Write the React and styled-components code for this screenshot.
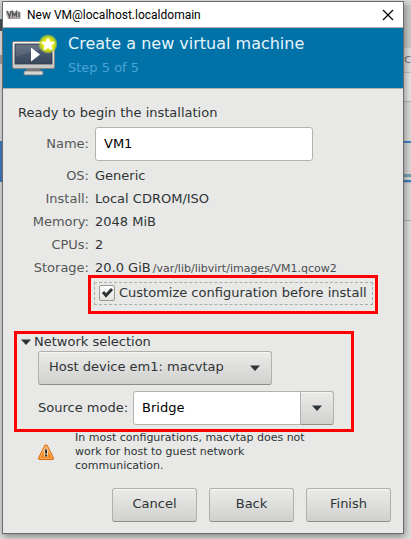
import React, { useState } from "react";
import styled, { createGlobalStyle } from "styled-components";

const GlobalStyle = createGlobalStyle`
  *, *::before, *::after { box-sizing: border-box; }
  html { background: #e2e2e2; }
  body { margin: 0; }
  body, button, input, select {
    font-family: "DejaVu Sans", sans-serif;
    font-size: 13px;
    color: #2e3436;
  }
`;

const Desktop = styled.div`
  display: grid;
  grid-template-columns: 2px 1fr 7px;
  min-height: 100vh;
  overflow: hidden;
`;

const Edge = styled.div`
  display: flex;
  flex-direction: column;
  overflow: hidden;
  background: #dedede;
`;

const EdgePart = styled.div`
  flex: none;
  height: ${(p) => p.$height}px;
  background: ${(p) => p.$fill};
  border-top: ${(p) => p.$line || 0}px solid ${(p) => p.$lineColor || "#c2c2c2"};
  font-size: 13px;
  line-height: 21px;
  color: #777;
`;

const Dialog = styled.main`
  position: relative;
  align-self: start;
  margin-top: 1px;
  border: 1px solid #6c6c6c;
  background: #e8e8e6;
  box-shadow: 1px 3px 7px rgba(0, 0, 0, 0.4);
`;

const TitleBar = styled.div`
  display: flex;
  align-items: center;
  height: 25px;
  padding: 0 6px 0 3px;
  background: #fff;
`;

const WindowTitle = styled.h1`
  flex: 1;
  margin: 0 0 0 6px;
  font: 12px/24px Roboto, "Open Sans", sans-serif;
  color: #000;
`;

const CloseButton = styled.button`
  display: flex;
  align-items: center;
  padding: 3px;
  border: 0;
  background: none;
`;

const Banner = styled.header`
  display: flex;
  gap: 11px;
  height: 62px;
  padding: 6px 8px;
  border: solid #b0b0ac;
  border-width: 1px 0;
  background: #0072a8;
`;

const BannerTitle = styled.h2`
  margin: 0;
  font-size: 16px;
  font-weight: normal;
  line-height: 20px;
  color: #e8f4fa;
`;

const Step = styled.p`
  margin: 4px 0 0;
  line-height: 20px;
  color: #4ba3d6;
`;

const Content = styled.form`
  padding: 16px 12px 11px 15px;
`;

const Intro = styled.p`
  margin: 0;
  line-height: 16px;
`;

const NameRow = styled.div`
  display: grid;
  grid-template-columns: 71px 1fr;
  gap: 6px;
  align-items: center;
  margin: 6px 0 3px;
`;

const NameLabel = styled.label`
  padding-bottom: 2px;
  text-align: right;
  color: #555856;
`;

const TextInput = styled.input`
  width: ${(p) => p.$width || "100%"};
  min-width: 0;
  height: 34px;
  padding: 0 8px 2px;
  border: 1px solid #b2b2ae;
  border-radius: ${(p) => (p.$joined ? "3px 0 0 3px" : "3px")};
  background: #fff;
  color: #000;
  outline: none;
`;

const Summary = styled.dl`
  display: grid;
  grid-template-columns: 71px 1fr;
  column-gap: 6px;
  margin: 0;
  line-height: 23px;
`;

const Term = styled.dt`
  text-align: right;
  color: #555856;
`;

const Detail = styled.dd`
  margin: 0;
  white-space: nowrap;
`;

const Path = styled.span`
  margin-left: 2px;
  font-size: 11px;
  color: #4a4e4e;
`;

const Callout = styled.div`
  position: relative;
  width: fit-content;
  margin: ${(p) => p.$margin};
  &::after {
    content: "";
    position: absolute;
    inset: ${(p) => p.$reach};
    border: 3px solid #fe0000;
    pointer-events: none;
  }
`;

const CheckLabel = styled.label`
  display: flex;
  align-items: center;
  gap: 4px;
  height: 23px;
  padding: 0 5px 2px 4px;
  border: 1px dashed #acacaa;
  white-space: nowrap;
`;

const CheckWrap = styled.span`
  display: grid;
  width: 16px;
  height: 16px;
  > * { grid-area: 1 / 1; }
`;

const Checkbox = styled.input`
  appearance: none;
  width: 16px;
  height: 16px;
  margin: 0;
  border: 1px solid #989894;
  border-radius: 2px;
  background: linear-gradient(#fff, #e2e2e0);
`;

const CheckMark = styled.svg`
  pointer-events: none;
`;

const Disclosure = styled.button`
  display: flex;
  align-items: center;
  gap: 3px;
  height: 16px;
  padding: 0 0 2px 3px;
  border: 0;
  background: none;
  line-height: 16px;
`;

const face = `
  border: 1px solid #b0b0ac;
  border-bottom-color: #8e8e8b;
  background: linear-gradient(#ebebe9, #d0d0ce);
  box-shadow: inset 0 1px #f8f8f6;
`;

const Network = styled.div`
  display: flex;
  flex-direction: column;
  gap: 6px;
  padding-left: 20px;
`;

const SelectWrap = styled.div`
  display: grid;
  grid-template-columns: 1fr 30px;
  align-items: center;
  width: 234px;
  > select { grid-area: 1 / 1 / 2 / 3; }
  > svg { grid-area: 1 / 2; pointer-events: none; z-index: 1; margin-left: 8px; }
`;

const Select = styled.select`
  ${face}
  appearance: none;
  height: 34px;
  padding: 0 30px 3px 10px;
  border-radius: 3px;
`;

const SourceRow = styled.div`
  display: flex;
  align-items: center;
  width: 296px;
`;

const SourceLabel = styled.label`
  flex: none;
  width: 95px;
  padding-bottom: 2px;
`;

const DropButton = styled.button`
  ${face}
  display: flex;
  flex: none;
  align-items: center;
  justify-content: center;
  width: 34px;
  height: 34px;
  margin-left: -1px;
  padding: 0;
  border-radius: 0 3px 3px 0;
`;

const Notice = styled.div`
  display: flex;
  align-items: center;
  gap: 21px;
  margin: 6px 0 15px;
  padding-left: 20px;
`;

const NoticeText = styled.p`
  max-width: 256px;
  margin: 0;
  font-size: 11px;
  line-height: 14px;
`;

const Actions = styled.div`
  display: flex;
  justify-content: flex-end;
  gap: 12px;
`;

const ActionButton = styled.button`
  ${face}
  width: 85px;
  height: 34px;
  padding: 0 0 3px;
  border-radius: 3px;
`;

const Arrow = ({ width = 10 }) => (
  <svg width={width} height="6" viewBox="0 0 10 6" aria-hidden="true">
    <path d="M0 .5h10L5 6z" fill="#2e3436" />
  </svg>
);

const AppMark = () => (
  <svg width="15" height="11" viewBox="0 0 15 11" aria-hidden="true">
    <path d="M0 2h13l2 2v5l-1 1H2L0 6z" fill="#c8c8c8" />
    <path d="M1 2l2.500 6 1.500-6M6.500 8V3l2 3.500 2-3.500v5M13 3v5" fill="none" stroke="#555" strokeWidth="1.400" />
    <path d="M2 9h12" stroke="#8b7376" />
  </svg>
);

const MonitorIcon = () => (
  <svg width="46" height="44" viewBox="0 0 46 44" aria-hidden="true">
    <defs>
      <radialGradient id="glow">
        <stop offset=".45" stopColor="#f2f000" />
        <stop offset=".78" stopColor="#c9d81c" stopOpacity=".85" />
        <stop offset="1" stopColor="#a8ce38" stopOpacity="0" />
      </radialGradient>
      <linearGradient id="bezel" x2="0" y2="1">
        <stop stopColor="#f8f8f8" />
        <stop offset="1" stopColor="#c4c4c2" />
      </linearGradient>
      <linearGradient id="screen" x2="0" y2="1">
        <stop stopColor="#566579" />
        <stop offset="1" stopColor="#38475c" />
      </linearGradient>
    </defs>
    <path d="M16 34h13l1 4H15z" fill="#777" />
    <rect x="13" y="37" width="19" height="4" rx="1" fill="#d5d5d3" stroke="#777" strokeWidth=".8" />
    <rect x="1.5" y="7.500" width="42" height="27" rx="1.500" fill="url(#bezel)" stroke="#858585" />
    <rect x="4" y="10" width="37" height="20" fill="url(#screen)" stroke="#303c4c" strokeWidth=".8" />
    <path d="M5 11h35v3Q24 15 5 23z" fill="#fff" opacity=".1" />
    <path d="M20 13.500l9 7-9 7z" fill="#fff" />
    <circle cx="37" cy="10" r="10" fill="url(#glow)" />
    <path d="M37 4.500l1.700 3.700 4.100.4-3.100 2.700.9 4-3.600-2.100-3.600 2.100.9-4-3.100-2.700 4.100-.4z" fill="#fff" stroke="#fff" strokeWidth="1.500" strokeLinejoin="round" />
  </svg>
);

const WarningIcon = () => (
  <svg width="16" height="16" viewBox="0 0 16 16" aria-label="Warning">
    <defs>
      <linearGradient id="amber" x2="0" y2="1">
        <stop stopColor="#fcaf5c" />
        <stop offset="1" stopColor="#f57900" />
      </linearGradient>
    </defs>
    <path d="M7 1h2l6.500 13-.5 1.500H1L.5 14z" fill="url(#amber)" stroke="#d9680a" strokeLinejoin="round" />
    <path d="M7.500 2.500h1L14 13.500v.8H2v-.8z" fill="none" stroke="#ffd0a0" strokeWidth=".7" />
    <rect x="6" y="5" width="4" height="8" rx="1" fill="#e6d8c8" opacity=".8" />
    <path d="M8 5.500v4M8 10.500v2" stroke="#333" strokeWidth="2" />
  </svg>
);

const leftParts = [
  [19, "#d2d2d0"], [12, "#45505a"], [24, "#e6e6e6"], [9, "#a4a4a4"],
  [77, "#e0e0e0"], [41, "#3f7dc0"],
];

const rightParts = [
  [5, "#d6d6d4"], [43, "#c9c9c7", 1],
  [24, "#dcdcdc", 0, "", "c"], [29, "#e4e4e4", 1],
  [38, "#dadada", 1, "#b4b4b4"], [2, "#deded8"], [2, "#3d82ca"],
  [31, "#d8d8d8"], [3, "#75a4b2"], [3, "#d8d8d8"], [2, "#3d82ca"],
  [38, "#dadada", 1, "#b4b4b4"], [1, "#b4b4b4"],
];

const EdgeColumn = ({ parts }) => (
  <Edge>
    {parts.map(([height, fill, line, lineColor, text], i) => (
      <EdgePart key={i} $height={height} $fill={fill} $line={line} $lineColor={lineColor}>
        {text}
      </EdgePart>
    ))}
  </Edge>
);

const details = [
  ["OS:", "Generic"],
  ["Install:", "Local CDROM/ISO"],
  ["Memory:", "2048 MiB"],
  ["CPUs:", "2"],
  ["Storage:", "20.0 GiB", "/var/lib/libvirt/images/VM1.qcow2"],
];

export default function App() {
  const [open, setOpen] = useState(true);
  return (
    <>
      <GlobalStyle />
      <Desktop>
        <EdgeColumn parts={leftParts} />
        <Dialog>
          <TitleBar>
            <AppMark />
            <WindowTitle>New VM@localhost.localdomain</WindowTitle>
            <CloseButton type="button" aria-label="Close">
              <svg width="12" height="12" viewBox="0 0 12 12">
                <path d="M1 1l10 10M11 1L1 11" stroke="#000" strokeWidth="1.200" />
              </svg>
            </CloseButton>
          </TitleBar>
          <Banner>
            <MonitorIcon />
            <div>
              <BannerTitle>Create a new virtual machine</BannerTitle>
              <Step>Step 5 of 5</Step>
            </div>
          </Banner>
          <Content onSubmit={(e) => e.preventDefault()}>
            <Intro>Ready to begin the installation</Intro>
            <NameRow>
              <NameLabel htmlFor="name">Name:</NameLabel>
              <TextInput id="name" $width="218px" defaultValue="VM1" />
            </NameRow>
            <Summary>
              {details.map(([term, value, path]) => (
                <React.Fragment key={term}>
                  <Term>{term}</Term>
                  <Detail>
                    {value}
                    {path && <Path>{path}</Path>}
                  </Detail>
                </React.Fragment>
              ))}
            </Summary>
            <Callout $margin="2px 0 30px 76px" $reach="-7px -5px -9px -6px">
              <CheckLabel>
                <CheckWrap>
                  <Checkbox type="checkbox" defaultChecked />
                  <CheckMark width="16" height="16" viewBox="0 0 16 16" aria-hidden="true">
                    <path d="M4 7l3 3.500L13 4" fill="none" stroke="#2e3436" strokeWidth="3" />
                  </CheckMark>
                </CheckWrap>
                Customize configuration before install
              </CheckLabel>
            </Callout>
            <Callout $margin="0" $reach="-4px -20px -7px -4px">
              <Disclosure type="button" aria-expanded={open} onClick={() => setOpen(!open)}>
                <Arrow />
                Network selection
              </Disclosure>
              {open && (
                <Network>
                  <SelectWrap>
                    <Select aria-label="Network source" defaultValue="em1">
                      <option value="em1">Host device em1: macvtap</option>
                    </Select>
                    <Arrow />
                  </SelectWrap>
                  <SourceRow>
                    <SourceLabel htmlFor="source">Source mode:</SourceLabel>
                    <TextInput id="source" $joined defaultValue="Bridge" />
                    <DropButton type="button" aria-label="Show source modes">
                      <Arrow />
                    </DropButton>
                  </SourceRow>
                </Network>
              )}
            </Callout>
            <Notice>
              <WarningIcon />
              <NoticeText>
                In most configurations, macvtap does not work for host to guest network communication.
              </NoticeText>
            </Notice>
            <Actions>
              <ActionButton type="button">Cancel</ActionButton>
              <ActionButton type="button">Back</ActionButton>
              <ActionButton type="submit">Finish</ActionButton>
            </Actions>
          </Content>
        </Dialog>
        <EdgeColumn parts={rightParts} />
      </Desktop>
    </>
  );
}
